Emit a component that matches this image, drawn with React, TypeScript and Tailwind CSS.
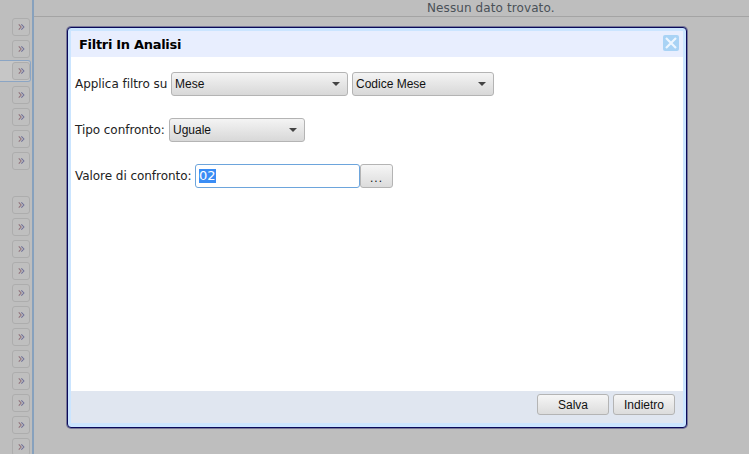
import React from "react";

const groups = [[false, false, true], [false, false, false, false], Array(12).fill(false)];

function Chevrons() {
  return (
    <svg width="7" height="6" viewBox="0 0 8 7" fill="none" strokeWidth="1.2">
      <path d="M0.8 0.5 L3.6 3.5 L0.8 6.5" stroke="#8f6f78" />
      <path d="M3.8 0.5 L6.8 3.5 L3.8 6.5" stroke="#6f6f98" />
    </svg>
  );
}

function Select({ label, className }: { label: string; className: string }) {
  return (
    <div className={`h-6 flex items-center justify-between rounded-[3px] border border-[#b4b4b4] bg-gradient-to-b from-[#f4f4f4] to-[#d8d8d8] pl-[3px] pr-[7px] font-['Liberation_Sans',sans-serif] text-xs text-[#111] ${className}`}>
      <span>{label}</span>
      <span className="h-0 w-0 border-x-4 border-t-4 border-x-transparent border-t-[#444]" />
    </div>
  );
}

function Button({ label, className }: { label: string; className: string }) {
  return (
    <div className={`flex items-center justify-center rounded-[3px] border border-[#b4b4b4] bg-gradient-to-b from-[#f6f6f6] to-[#dcdcdc] font-['Liberation_Sans',sans-serif] text-xs text-[#111] ${className}`}>
      {label}
    </div>
  );
}

export default function App() {
  return (
    <div className="relative h-[454px] w-[749px] overflow-hidden bg-[#bebebe] font-['DejaVu_Sans',sans-serif]">
      <div className="flex h-full">
        <div className="flex h-full w-[34px] shrink-0 flex-col gap-[22px] overflow-hidden border-r-2 border-[#87a1bd] pt-[16px]">
          {groups.map((rows, g) => (
            <div key={g} className={`flex flex-col ${g === 1 ? "-mt-5" : ""}`}>
              {rows.map((active, i) => (
                <div
                  key={i}
                  className={`flex h-[22px] w-[31px] shrink-0 items-center justify-end ${active ? "rounded-r-[3px] border border-l-0 border-[#8ba5c4] bg-[#c6c6c6]" : "border border-transparent"}`}
                >
                  <div className="flex h-[18px] w-[18px] items-center justify-center rounded-[3px] border border-[#adadad] bg-[#bfbfbf]">
                    <Chevrons />
                  </div>
                </div>
              ))}
            </div>
          ))}
        </div>
        <div className="flex-1">
          <div className="h-[17px] border-b border-[#a4a4a4] pl-[393px] pt-[1px] text-xs leading-[14px] tracking-[0.1px] text-[#4a5158]">
            Nessun dato trovato.
          </div>
        </div>
      </div>

      <div className="absolute left-[67px] top-[27px] flex h-[401px] w-[620px] flex-col rounded-[4px] border border-[#0a0a5a] bg-[#cbe5ff] pb-[4px] pl-[3px] pr-[3px] pt-[3px] ring-1 ring-[#10105f]/40">
        <div className="flex h-[26px] shrink-0 items-center justify-between bg-[#e8eefe] pl-2 pr-[4px]">
          <span className="pt-[2px] text-[13px] font-bold tracking-[-0.3px] text-black">Filtri In Analisi</span>
          <div className="mb-[2px] flex h-4 w-4 items-center justify-center rounded-[2px] bg-[#a9d3f5]">
            <svg width="12" height="12" viewBox="0 0 12 12" stroke="#eef6ff" strokeWidth="2.2">
              <path d="M1 1 L11 11 M11 1 L1 11" />
            </svg>
          </div>
        </div>
        <div className="flex flex-1 flex-col bg-white pl-1 pt-[15px] text-xs tracking-[-0.05px] text-[#222]">
          <div className="flex h-6 items-center">
            <span className="w-[96px]">Applica filtro su</span>
            <Select label="Mese" className="w-[177px] tracking-normal" />
            <Select label="Codice Mese" className="ml-1 w-[142px] tracking-normal" />
          </div>
          <div className="mt-[22px] flex h-6 items-center">
            <span className="w-[94px]">Tipo confronto:</span>
            <Select label="Uguale" className="w-[136px] tracking-normal" />
          </div>
          <div className="mt-[22px] flex h-6 items-center">
            <span className="w-[120px]">Valore di confronto:</span>
            <div className="flex h-6 w-[165px] items-center rounded-[3px] border border-[#6da5dc] bg-white pl-[3px] text-[13px] tracking-normal text-white">
              <span className="bg-[#3a8df5] leading-[14px]">02</span>
            </div>
            <Button label="..." className="h-6 w-[33px] pt-1 tracking-[1px]" />
          </div>
        </div>
        <div className="flex h-[32px] shrink-0 items-center justify-end gap-[4px] bg-[#e0e6f0] pb-[5px] pr-2">
          <Button label="Salva" className="h-[21px] w-[72px]" />
          <Button label="Indietro" className="h-[21px] w-[62px]" />
        </div>
      </div>
    </div>
  );
}
